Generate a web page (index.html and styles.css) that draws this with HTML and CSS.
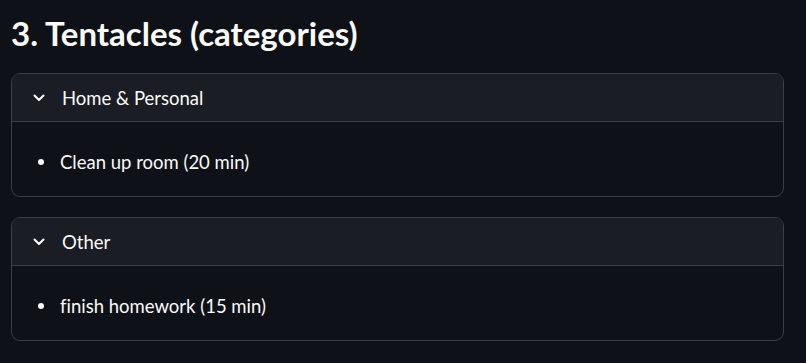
FILE: index.html
```html
<!DOCTYPE html>
<html>
<head>
<meta charset="utf-8">
<link rel="stylesheet" href="styles.css">
</head>
<body>
<main class="page">
  <h2 class="title">3. Tentacles (categories)</h2>
  <section class="expander">
    <div class="exp-head">
      <svg class="chev" width="12" height="8" viewBox="0 0 12 8"><polyline points="1.5,1.5 6,6 10.5,1.5" fill="none" stroke="#fafafa" stroke-width="2" stroke-linecap="round" stroke-linejoin="round"/></svg>
      <span class="exp-label">Home &amp; Personal</span>
    </div>
    <div class="exp-body">
      <ul class="items"><li>Clean up room (20 min)</li></ul>
    </div>
  </section>
  <section class="expander">
    <div class="exp-head">
      <svg class="chev" width="12" height="8" viewBox="0 0 12 8"><polyline points="1.5,1.5 6,6 10.5,1.5" fill="none" stroke="#fafafa" stroke-width="2" stroke-linecap="round" stroke-linejoin="round"/></svg>
      <span class="exp-label">Other</span>
    </div>
    <div class="exp-body">
      <ul class="items"><li>finish homework (15 min)</li></ul>
    </div>
  </section>
</main>
</body>
</html>
```
FILE: styles.css
```css
html, body {
  margin: 0;
  padding: 0;
  background: #0e1117;
  color: #fafafa;
  font-family: "Lato", "Noto Sans", sans-serif;
  font-variant-ligatures: none;
}
.page {
  width: 773px;
  padding: 13px 0 0 11px;
  display: flex;
  flex-direction: column;
  gap: 20px;
}
.title {
  margin: 0;
  font-size: 33px;
  font-weight: 700;
  line-height: 40px;
  height: 40px;
}
.expander {
  border: 1px solid #3b3e46;
  border-radius: 9px;
  overflow: hidden;
}
.exp-head {
  height: 47px;
  display: flex;
  align-items: center;
  background: #1b1d25;
  border-bottom: 1px solid #3b3e46;
  padding-left: 21px;
}
.chev {
  display: block;
  margin-top: 1px;
}
.exp-label {
  margin-left: 17px;
  font-size: 18.5px;
  line-height: 24px;
}
.exp-body {
  height: 74px;
  box-sizing: border-box;
  padding-top: 26px;
}
.items {
  margin: 0;
  padding: 0 0 0 48px;
  list-style: none;
}
.items li {
  position: relative;
  font-size: 18.5px;
  line-height: 28px;
}
.items li::before {
  content: "";
  position: absolute;
  left: -22px;
  top: 11px;
  width: 6px;
  height: 6px;
  border-radius: 50%;
  background: #fafafa;
}
```
